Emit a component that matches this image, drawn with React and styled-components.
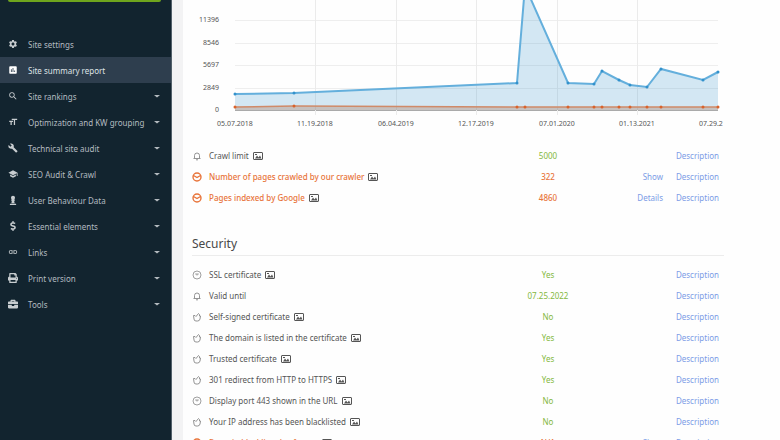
import React from 'react';
import styled, { createGlobalStyle } from 'styled-components';
import {
    MdSettings,
    MdAssessment,
    MdSearch,
    MdFormatSize,
    MdBuild,
    MdSchool,
    MdLink
} from 'react-icons/md';
import { FaChessPawn, FaDollarSign, FaPrint, FaBriefcase } from 'react-icons/fa';

const GlobalStyle = createGlobalStyle`
    * {
        box-sizing: border-box;
    }
    body {
        margin: 0;
        background: #fefefe;
        font-family: "Noto Sans", sans-serif;
        font-size: 8px;
        color: #555;
    }
`;

const Page = styled.div`
    display: flex;
    height: 100vh;
    overflow: hidden;
`;

const Sidebar = styled.nav`
    flex: 0 0 172px;
    background: #12242f;
    border-right: 1px solid #52606a;
`;

const Accent = styled.div`
    height: 2px;
    margin: 0 10px 29px 8px;
    background: #6fa51d;
    border-radius: 0 0 2px 2px;
`;

const NavList = styled.ul`
    margin: 0;
    padding: 0;
    list-style: none;
`;

const NavLink = styled.a`
    display: flex;
    align-items: center;
    height: 26px;
    padding: 0 11px 0 8px;
    background: ${props => (props.$active ? '#2e3e4e' : 'transparent')};
    color: ${props => (props.$active ? '#dfe3e6' : '#b4bbc0')};
    text-decoration: none;
    white-space: nowrap;

    > svg:first-child {
        width: 10px;
        height: 10px;
        margin-right: 10px;
        color: ${props => (props.$active ? '#fff' : '#c8cdd0')};
    }
`;

const Label = styled.span`
    flex: 1;
`;

const Gutter = styled.div`
    flex: 0 0 11px;
    background: #f3f3f4;
`;

const Main = styled.main`
    flex: 1;
    min-width: 0;
    padding: 0 56px 0 9px;
`;

const Chart = styled.svg`
    display: block;
    width: 100%;
    height: auto;
    font-size: 7px;
`;

const Heading = styled.h2`
    margin: 27px 0 8px;
    padding-bottom: 2px;
    border-bottom: 1px solid #ececec;
    font-size: 12px;
    font-weight: 400;
    line-height: 18px;
    color: #484848;
`;

const Table = styled.table`
    width: 100%;
    table-layout: fixed;
    border-collapse: collapse;
`;

const Row = styled.tr`
    height: 21px;
    color: ${props => (props.$warn ? '#e8743a' : '#555')};
    font-weight: ${props => (props.$warn ? '500' : '400')};
`;

const Cell = styled.td`
    width: ${props => props.$width || 'auto'};
    padding: 0 ${props => props.$end || '0'} 0 0;
    text-align: ${props => props.$align || 'left'};
    white-space: nowrap;
`;

const Name = styled.span`
    display: flex;
    align-items: center;
    gap: 4px;
`;

const PhotoSvg = styled.svg`
    width: 10px;
    height: 10px;
    color: #555;
`;

const Value = styled.span`
    color: ${props => (props.$warn ? '#e8743a' : '#84b840')};
`;

const Action = styled.a`
    color: #7c9ce6;
    font-weight: 400;
    text-decoration: none;
`;

const StatusSvg = styled.svg`
    display: block;
    width: 10px;
    height: 10px;
    color: ${props => (props.$warn ? '#e8743a' : '#888')};
`;

const navItems = [
    { icon: MdSettings, text: 'Site settings', plain: true },
    { icon: MdAssessment, text: 'Site summary report', plain: true, active: true },
    { icon: MdSearch, text: 'Site rankings' },
    { icon: MdFormatSize, text: 'Optimization and KW grouping' },
    { icon: MdBuild, text: 'Technical site audit' },
    { icon: MdSchool, text: 'SEO Audit & Crawl' },
    { icon: FaChessPawn, text: 'User Behaviour Data' },
    { icon: FaDollarSign, text: 'Essential elements' },
    { icon: MdLink, text: 'Links' },
    { icon: FaPrint, text: 'Print version' },
    { icon: FaBriefcase, text: 'Tools' }
];

const crawlRows = [
    { status: 'bell', name: 'Crawl limit', photo: true, value: '5000' },
    { status: 'warn', name: 'Number of pages crawled by our crawler', photo: true, value: '322', action: 'Show' },
    { status: 'warn', name: 'Pages indexed by Google', photo: true, value: '4860', action: 'Details' }
];

const securityRows = [
    { status: 'clock', name: 'SSL certificate', photo: true, value: 'Yes' },
    { status: 'bell', name: 'Valid until', value: '07.25.2022' },
    { status: 'thumb', name: 'Self-signed certificate', photo: true, value: 'No' },
    { status: 'thumb', name: 'The domain is listed in the certificate', photo: true, value: 'Yes' },
    { status: 'thumb', name: 'Trusted certificate', photo: true, value: 'Yes' },
    { status: 'thumb', name: '301 redirect from HTTP to HTTPS', photo: true, value: 'Yes' },
    { status: 'clock', name: 'Display port 443 shown in the URL', photo: true, value: 'No' },
    { status: 'thumb', name: 'Your IP address has been blacklisted', photo: true, value: 'No' },
    { status: 'warn', name: 'Domain blacklisted software', photo: true, value: 'N/A', action: 'Show' }
];

const xs = [43, 102, 325, 333, 376, 402, 410, 427, 438, 455, 469, 511, 526];
const pages = [94, 93, 83, -14, 83, 84, 71, 80, 85, 87, 69, 80, 72];
const crawled = [107, 106, 107, 107, 107, 107, 107, 107, 107, 107, 107, 107, 107];

const toPoints = ys => ys.map((y, i) => `${xs[i]},${y}`).join(' ');
const toArea = ys => `43,110 ${toPoints(ys)} 526,110`;

const yLabels = [
    ['14245', -2],
    ['11396', 20],
    ['8546', 43],
    ['5697', 65],
    ['2849', 88],
    ['0', 110]
];
const xLabels = [
    ['05.07.2018', 43],
    ['11.19.2018', 123],
    ['06.04.2019', 204],
    ['12.17.2019', 284],
    ['07.01.2020', 365],
    ['01.13.2021', 445]
];

const Status = ({ type }) => (
    <StatusSvg $warn={type === 'warn'} viewBox="0 0 10 10" fill="none" stroke="currentColor">
        {type === 'bell' && <path d="M1.5 7.5h7M2.5 7V4.500a2.500 2.500 0 0 1 5 0V7M4 8.800h2" strokeWidth="0.9" />}
        {type === 'clock' && <path d="M5 1a4 4 0 1 0 0 8a4 4 0 0 0 0-8M3.200 4h3.600M5 4v1.500" strokeWidth="0.8" />}
        {type === 'thumb' && (
            <path d="M1.500 3.500h1.500l1 1l2.500-3l1 1v1.500h1l-.500 3a2.500 2.500 0 0 1-2.500 2h-1.500a2 2 0 0 1-2-2z" strokeWidth="0.9" />
        )}
        {type === 'warn' && (
            <path d="M5 1a4 4 0 1 0 0 8a4 4 0 0 0 0-8M1.500 3.500l3.500 2l3.500-2" strokeWidth="1.400" />
        )}
    </StatusSvg>
);

const Photo = () => (
    <PhotoSvg viewBox="0 0 10 10" fill="none" stroke="currentColor">
        <rect x="0.500" y="1.500" width="9" height="7" rx="0.500" />
        <path d="M2 7.500l2-3l1.500 2l1.500-2l1.500 3z" fill="currentColor" stroke="none" />
        <path d="M2 3.500h2" />
    </PhotoSvg>
);

const ReportTable = ({ rows }) => (
    <Table>
        <tbody>
            {rows.map(row => {
                const warn = row.status === 'warn';
                return (
                    <Row key={row.name} $warn={warn}>
                        <Cell $width="17px"><Status type={row.status} /></Cell>
                        <Cell>
                            <Name>
                                {row.name}
                                {row.photo && <Photo />}
                            </Name>
                        </Cell>
                        <Cell $width="140px" $align="center"><Value $warn={warn}>{row.value}</Value></Cell>
                        <Cell $width="45px" $align="right">
                            {row.action && <Action href="#">{row.action}</Action>}
                        </Cell>
                        <Cell $width="61px" $align="right" $end="5px"><Action href="#">Description</Action></Cell>
                    </Row>
                );
            })}
        </tbody>
    </Table>
);

const PagesChart = () => (
    <Chart viewBox="0 0 532 145" fill="#555">
        {yLabels.map(([text, y]) => (
            <g key={text}>
                <path d={`M43 ${y}.500H526`} stroke={y === 110 ? '#aaa' : '#eee'} />
                <text x="27" y={y + 2} textAnchor="end">{text}</text>
            </g>
        ))}
        {xLabels.map(([text, x]) => (
            <g key={text}>
                <path d={`M${x}.500 0V115`} stroke={x === 43 ? 'none' : '#ebebeb'} />
                <text x={x} y="126" textAnchor="middle">{text}</text>
            </g>
        ))}
        <text x="507" y="126">07.29.2</text>
        <polygon points={toArea(pages)} fill="#3a97cf" fillOpacity="0.22" />
        <polygon points={toArea(crawled)} fill="#a86a48" fillOpacity="0.3" />
        <polyline points={toPoints(pages)} fill="none" stroke="#64afdc" strokeWidth="2" />
        <polyline points={toPoints(crawled)} fill="none" stroke="#d08a68" strokeWidth="1.5" />
        {xs.map((x, i) => (
            <g key={x}>
                <circle cx={x} cy={pages[i]} r="1.5" fill="#3392cc" />
                <circle cx={x} cy={crawled[i]} r="1.5" fill="#d9622b" />
            </g>
        ))}
    </Chart>
);

const Caret = () => (
    <svg width="6" height="4" viewBox="0 0 6 4" fill="currentColor">
        <path d="M0 1h6l-3 2.500z" />
    </svg>
);

function App() {
    return (
        <Page>
            <GlobalStyle />
            <Sidebar>
                <Accent />
                <NavList>
                    {navItems.map(({ icon: Icon, text, plain, active }) => (
                        <li key={text}>
                            <NavLink href="#" $active={active}>
                                <Icon />
                                <Label>{text}</Label>
                                {!plain && <Caret />}
                            </NavLink>
                        </li>
                    ))}
                </NavList>
            </Sidebar>
            <Gutter />
            <Main>
                <PagesChart />
                <ReportTable rows={crawlRows} />
                <Heading>Security</Heading>
                <ReportTable rows={securityRows} />
            </Main>
        </Page>
    );
}

export default App;
